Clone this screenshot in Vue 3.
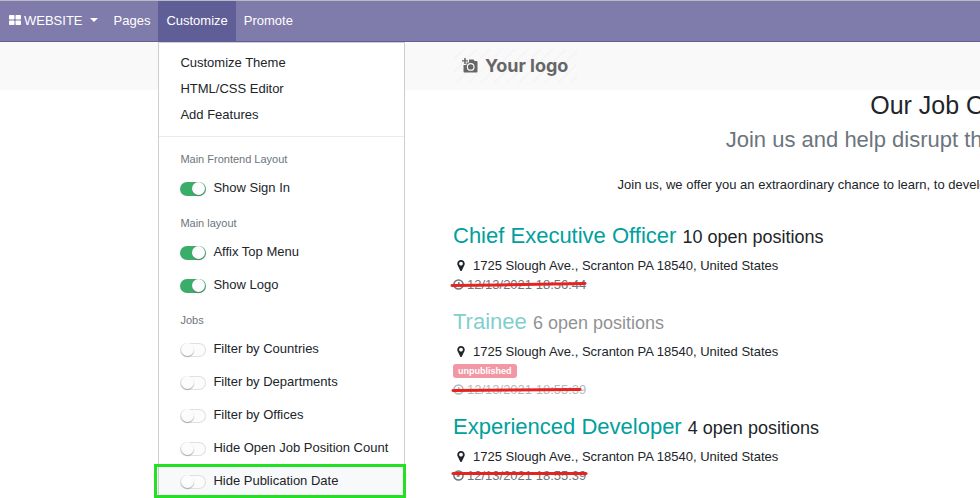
<script setup>
import { ref } from 'vue'

const links = ['Customize Theme', 'HTML/CSS Editor', 'Add Features']

const groups = ref([
  { title: 'Main Frontend Layout', options: [{ id: 'signin', label: 'Show Sign In', on: true }] },
  {
    title: 'Main layout',
    options: [
      { id: 'affix', label: 'Affix Top Menu', on: true },
      { id: 'logo', label: 'Show Logo', on: true },
    ],
  },
  {
    title: 'Jobs',
    options: [
      { id: 'countries', label: 'Filter by Countries', on: false },
      { id: 'departments', label: 'Filter by Departments', on: false },
      { id: 'offices', label: 'Filter by Offices', on: false },
      { id: 'count', label: 'Hide Open Job Position Count', on: false },
      { id: 'date', label: 'Hide Publication Date', on: false, marked: true },
    ],
  },
])

const address = '1725 Slough Ave., Scranton PA 18540, United States'
const jobs = [
  { title: 'Chief Executive Officer', count: 10, date: '12/13/2021 18:56:44', published: true, stroke: 'M3 10.5 L50 10 L136 8.5' },
  { title: 'Trainee', count: 6, date: '12/13/2021 18:55:39', published: false, stroke: 'M4 10.5 L131 9.5' },
  { title: 'Experienced Developer', count: 4, date: '12/13/2021 18:55:39', published: true, stroke: 'M4 7.5 L137 7.5' },
]
</script>

<template>
  <div class="page">
    <nav class="navbar">
      <button class="nav-item brand" type="button">
        <svg class="grid-icon" viewBox="0 0 12 10" aria-hidden="true">
          <rect x="0" y="0" width="5.5" height="4.6" rx="0.8" />
          <rect x="6.5" y="0" width="5.5" height="4.6" rx="0.8" />
          <rect x="0" y="5.4" width="5.5" height="4.6" rx="0.8" />
          <rect x="6.5" y="5.4" width="5.5" height="4.6" rx="0.8" />
        </svg>
        WEBSITE
        <span class="caret"></span>
      </button>
      <button class="nav-item" type="button">Pages</button>
      <div class="dropdown">
        <button class="nav-item active" type="button">Customize</button>
        <div class="menu">
          <a v-for="link in links" :key="link" class="menu-link" href="#">{{ link }}</a>
          <hr class="divider" />
          <section v-for="group in groups" :key="group.title">
            <h6 class="group-title">{{ group.title }}</h6>
            <label
              v-for="option in group.options"
              :key="option.id"
              class="option"
              :class="{ marked: option.marked }"
              :for="option.id"
            >
              <input :id="option.id" v-model="option.on" class="switch" type="checkbox" />
              {{ option.label }}
            </label>
          </section>
        </div>
      </div>
      <button class="nav-item" type="button">Promote</button>
    </nav>

    <header class="site-header">
      <a class="logo" href="#">
        <svg class="camera" viewBox="0 0 16 16" aria-hidden="true">
          <path d="M2.2 0h1.500v2.200H6v1.400H3.700V6H2.200V3.600H0V2.200h2.200z" />
          <path fill-rule="evenodd" d="M7 1.500h4.500l1.200 1.500H14.500a1 1 0 0 1 1 1V13.500a1 1 0 0 1-1 1H2.500a1 1 0 0 1-1-1V7H4.500V4.500H7zM8.700 5a3.900 3.900 0 1 0 0 7.800a3.900 3.900 0 0 0 0-7.800zM8.700 6.200a2.700 2.700 0 1 1 0 5.400a2.700 2.700 0 0 1 0-5.400z" />
          <circle cx="8.700" cy="8.900" r="1.700" />
        </svg>
        Your logo
      </a>
    </header>

    <main class="content">
      <div class="intro">
        <h1>Our Job Offers</h1>
        <h2>Join us and help disrupt the enterprise market!</h2>
        <p>Join us, we offer you an extraordinary chance to learn, to develop and to be part of an exciting experience and team.</p>
      </div>

      <article v-for="job in jobs" :key="job.title" class="job" :class="{ draft: !job.published }">
        <h3 class="job-title"><a href="#">{{ job.title }}</a> <small>{{ job.count }} open positions</small></h3>
        <div class="line address">
          <svg class="pin" viewBox="0 0 1024 1792" aria-hidden="true">
            <path d="M768 640q0-106-75-181t-181-75-181 75-75 181 75 181 181 75 181-75 75-181zm256 0q0 109-33 179l-364 774q-16 33-47.500 52t-67.500 19-67.500-19-46.500-52l-365-774q-33-70-33-179 0-212 150-362t362-150 362 150 150 362z" />
          </svg>
          {{ address }}
        </div>
        <div v-if="!job.published" class="line"><span class="badge">unpublished</span></div>
        <div class="line date">
          <span class="stamp">
            <svg class="clock" viewBox="0 0 12 12" aria-hidden="true">
              <circle cx="6" cy="6" r="5" />
              <path d="M6.300 3.200v3.300H4" />
            </svg>
            {{ job.date }}
          </span>
          <svg class="strike" viewBox="0 0 140 19" aria-hidden="true"><path :d="job.stroke" /></svg>
        </div>
      </article>
    </main>
  </div>
</template>

<style>
body {
  background: #fff;
}
</style>

<style scoped>
.page {
  min-height: 100vh;
  overflow: hidden;
  font: 13px/19px "Liberation Sans", Arial, sans-serif;
  color: #212529;
}
.navbar {
  display: flex;
  height: 42px;
  box-sizing: border-box;
  padding-left: 1px;
  border-top: 1px solid #bcbac4;
  border-bottom: 1px solid #5f5e97;
  background: #7f7bab;
}
.nav-item {
  display: flex;
  align-items: center;
  height: 40px;
  padding: 0 8px 2px;
  border: 0;
  background: none;
  color: #fff;
  font: inherit;
  white-space: nowrap;
}
.nav-item.active {
  background: #5f5e97;
}
.grid-icon {
  width: 12px;
  height: 10px;
  margin-right: 3px;
  fill: #fff;
}
.caret {
  margin-left: 7px;
  border: 4px solid transparent;
  border-top-color: #fff;
  border-bottom: 0;
}
.dropdown {
  position: relative;
}
.menu {
  position: absolute;
  z-index: 2;
  top: 100%;
  left: 0;
  width: max-content;
  padding: 7px 0 0;
  border: 1px solid #ccced1;
  background: #fff;
  margin-top: 1px;
}
.menu-link {
  display: block;
  padding: 0 21px;
  line-height: 26px;
  color: #212529;
  text-decoration: none;
}
.divider {
  margin: 8px 0 11px;
  border: 0;
  border-top: 1px solid #e9ecef;
}
.group-title {
  margin: 8px 0 0;
  padding: 0 21px;
  font-size: 11px;
  font-weight: 400;
  line-height: 23px;
  color: #6c757d;
}
.option {
  display: flex;
  align-items: center;
  gap: 7px;
  height: 33px;
  padding: 0 16px 0 21px;
}
.option.marked {
  position: relative;
  background: #f8f9fa;
}
.option.marked::after {
  content: "";
  position: absolute;
  inset: 0 -2px -1px -5px;
  border: 3px solid #22e022;
}
.switch {
  position: relative;
  appearance: none;
  flex: none;
  width: 26px;
  height: 14px;
  margin: 2px 0 0;
  border-radius: 7px;
  background: #fcfcfc;
  box-shadow: inset 0 0 0 1px #dee0e2;
}
.switch::before {
  content: "";
  position: absolute;
  top: 0;
  left: 1px;
  width: 13px;
  height: 13px;
  border-radius: 50%;
  background: #fcfcfc;
  box-shadow: 0 1px 1px #a5a7a9;
}
.switch:checked {
  background: #3aad6b;
  box-shadow: none;
}
.switch:checked::before {
  left: 12px;
  box-shadow: 0 1px 1px #55806a;
}
.site-header {
  display: flex;
  align-items: center;
  height: 48px;
  padding-left: 453px;
  background: #f9f9f9;
}
.logo {
  display: flex;
  align-items: center;
  gap: 7px;
  height: 34px;
  padding: 0 9px;
  background: repeating-linear-gradient(135deg, #f9f9f9 0 7px, #f5f5f5 7px 9px);
  color: #666;
  font: 700 18px/34px Inter, sans-serif;
  text-decoration: none;
}
.camera {
  width: 16px;
  height: 16px;
  fill: #666;
}
.content {
  padding-left: 453px;
}
.intro {
  width: max-content;
  min-width: 998px;
  margin-bottom: 28px;
  text-align: center;
}
.intro h1 {
  margin: 0;
  font-size: 25px;
  font-weight: 400;
  line-height: 31px;
}
.intro h2 {
  margin: 5px 0 22px;
  font-size: 22px;
  font-weight: 400;
  line-height: 27px;
  color: #6c757d;
}
.intro p {
  margin: 0;
}
.job {
  margin-bottom: 14px;
}
.job-title {
  margin: 0 0 7px;
  font-size: 22px;
  font-weight: 400;
  line-height: 27px;
}
.job-title a {
  color: #00a09d;
  text-decoration: none;
}
.job-title small {
  font-size: 18px;
  line-height: 18px;
}
.line {
  display: flex;
  align-items: center;
  height: 19px;
}
.address {
  gap: 8px;
  padding-left: 4px;
}
.pin {
  width: 8px;
  height: 13px;
  fill: #212529;
}
.stamp {
  display: flex;
  align-items: center;
  gap: 3px;
  color: #6c757d;
}
.clock {
  width: 11px;
  height: 11px;
  fill: none;
  stroke: #6c757d;
  stroke-width: 1.7px;
}
.draft .job-title,
.draft .badge,
.draft .stamp {
  opacity: 0.5;
}
.badge {
  padding: 0 5px;
  border-radius: 3px;
  background: #e6324b;
  color: #fff;
  font: 700 9px/14px "Liberation Sans", Arial, sans-serif;
}
.date {
  position: relative;
}
.strike {
  position: absolute;
  top: 0;
  left: -4px;
  width: 140px;
  height: 19px;
  fill: none;
  stroke: #e5231f;
  stroke-width: 3px;
  stroke-linecap: round;
}
</style>
